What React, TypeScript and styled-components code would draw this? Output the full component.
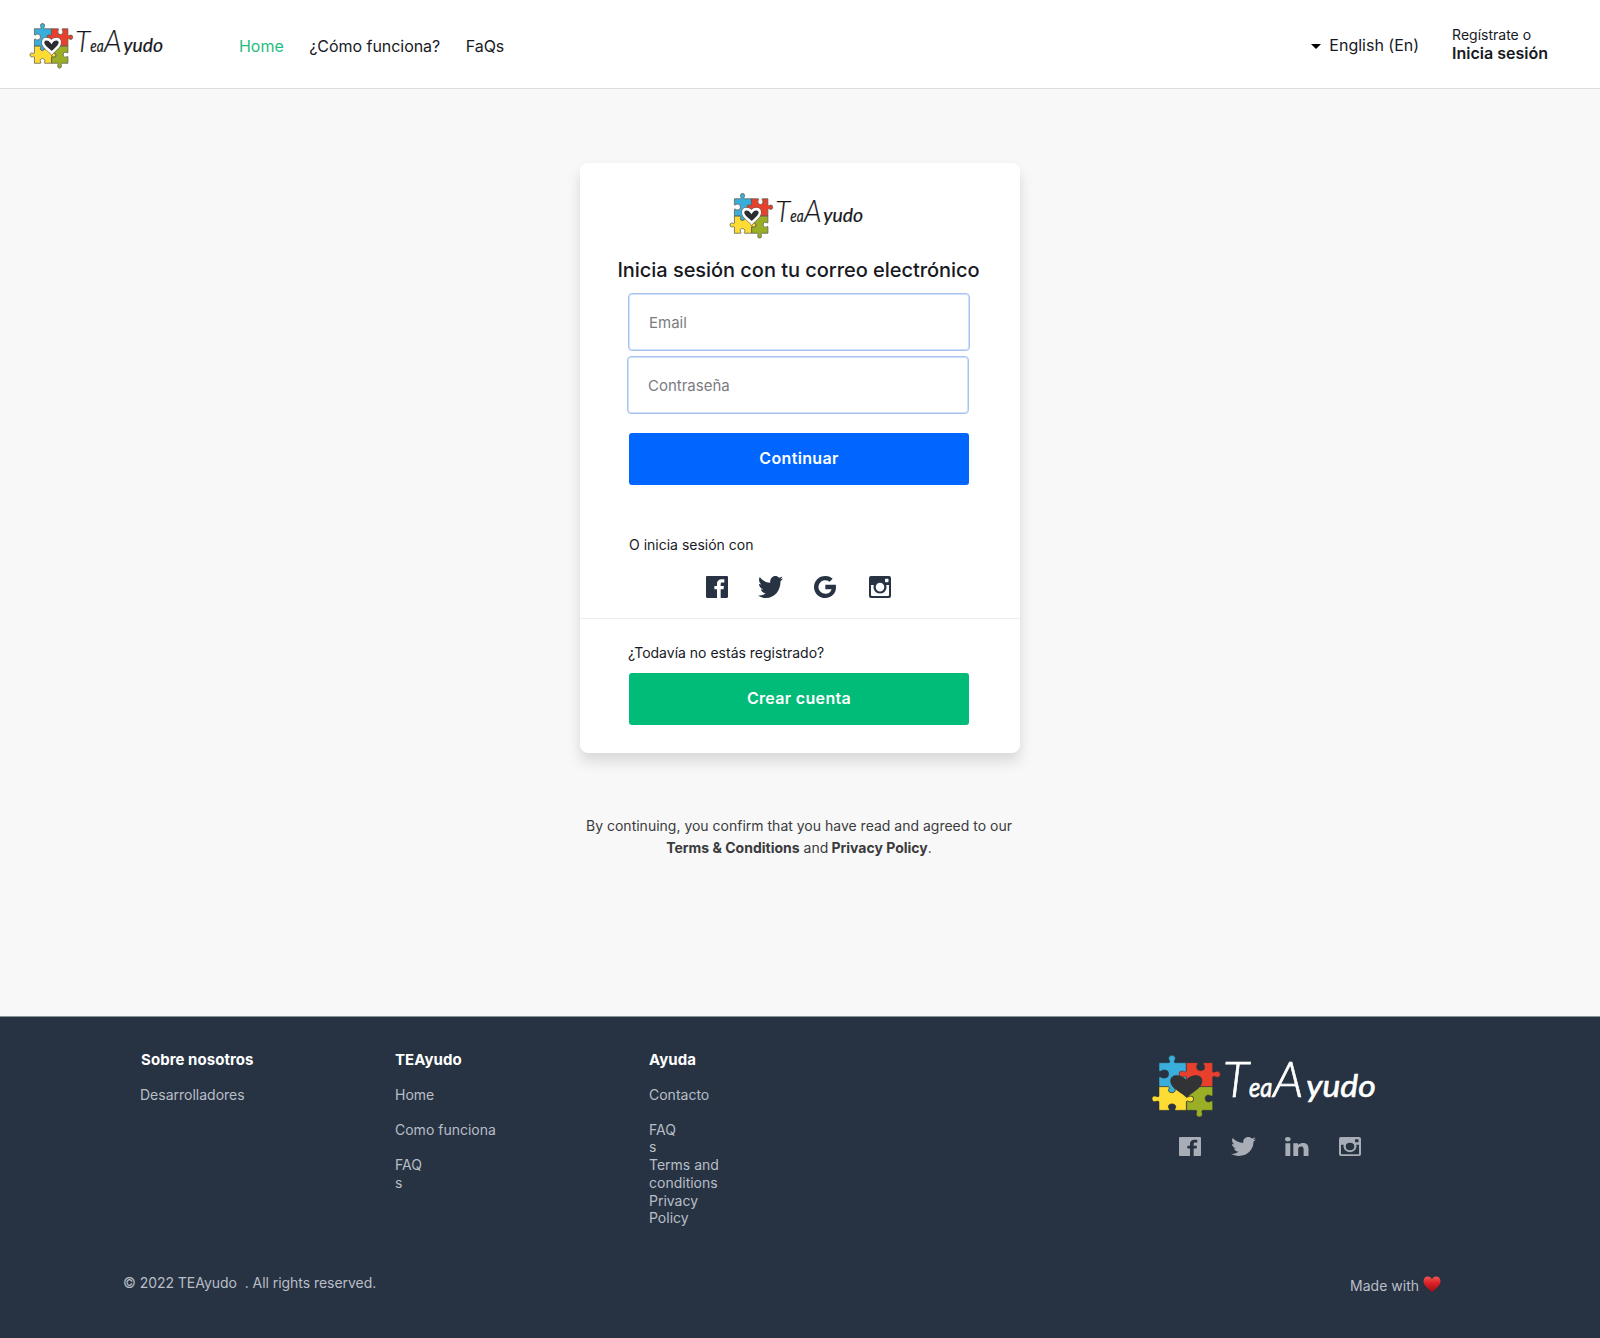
import React from "react";
import styled, { createGlobalStyle, css } from "styled-components";
import { IoLogoFacebook, IoLogoTwitter, IoLogoGoogle } from "react-icons/io";
import { FaLinkedinIn } from "react-icons/fa";

const GlobalStyle = createGlobalStyle`
  *, *::before, *::after { box-sizing: border-box; }
  body {
    margin: 0;
    background: #f8f8f8;
    color: #18191f;
    font-family: Inter, "Liberation Sans", sans-serif;
  }
  a { color: inherit; text-decoration: none; }
`;

const Page = styled.div`
  display: flex;
  flex-direction: column;
  min-height: 1338px;
`;

/* ---------- Header ---------- */

const Header = styled.header`
  display: flex;
  align-items: flex-start;
  height: 89px;
  padding: 0 52px 0 29px;
  background: #fff;
  border-bottom: 1px solid #dcdcdc;
`;

const HeaderLogo = styled.a`
  display: block;
  margin-top: 22.5px;
`;

const Nav = styled.nav`
  display: flex;
  gap: 25.5px;
  margin: 36px auto 0 75px;
  font-size: 16px;
  line-height: 20px;
  letter-spacing: -0.04px;
`;

const NavLink = styled.a<{ $active?: boolean }>`
  color: ${(p) => (p.$active ? "#1fbd80" : "#18191f")};
`;

const Language = styled.button`
  display: flex;
  align-items: center;
  gap: 8px;
  margin: 35px 33px 0 0;
  padding: 0;
  border: 0;
  background: none;
  color: #18191f;
  font: 400 16px/20px Inter, "Liberation Sans", sans-serif;
`;

const Caret = styled.span`
  border: 5px solid transparent;
  border-top-color: #000;
  border-bottom: 0;
  margin-top: 2px;
`;

const Account = styled.a`
  display: flex;
  flex-direction: column;
  margin-top: 26px;
  font-size: 14px;
  line-height: 18px;
`;

const AccountStrong = styled.strong`
  font-size: 16px;
  line-height: 19px;
  font-weight: 600;
`;

/* ---------- Login card ---------- */

const Main = styled.main`
  display: flex;
  flex-direction: column;
  align-items: center;
  height: 927px;
  padding-top: 74px;
`;

const Card = styled.section`
  width: 440px;
  height: 590px;
  background: #fff;
  border-radius: 8px;
  box-shadow: 0 9px 14px rgba(0, 0, 0, 0.12), 0 0 10px rgba(0, 0, 0, 0.02);
`;

const CardLogo = styled.div`
  width: 134px;
  height: 46px;
  margin: 30px 0 0 149px;
`;

const Title = styled.h1`
  margin: 18.5px 0 0 -3px;
  font-size: 20px;
  line-height: 24px;
  font-weight: 500;
  letter-spacing: -0.045px;
  text-align: center;
  white-space: nowrap;
`;

const Form = styled.form`
  display: flex;
  flex-direction: column;
  padding: 11.5px 0 0 48px;
`;

const Field = styled.input<{ $shift?: number }>`
  width: 342px;
  height: 58px;
  margin: 0 0 5px ${(p) => p.$shift ?? 0}px;
  padding: 0 20px;
  border: 1px solid #a6c3ee;
  border-radius: 4px;
  box-shadow: inset 0 0 0 1px #cfe1fc;
  background: #fff;
  outline: none;
  font: 400 15px/20px Inter, "Liberation Sans", sans-serif;
  &::placeholder { color: #7b7b82; opacity: 1; }
`;

const Button = styled.button<{ $tone: "blue" | "green" }>`
  width: 340px;
  height: 52px;
  padding: 0 0 2px;
  border: 0;
  border-radius: 3px;
  background: ${(p) => (p.$tone === "blue" ? "#0066ff" : "#00bc78")};
  color: #fff;
  font: 600 16px/20px Inter, "Liberation Sans", sans-serif;
  letter-spacing: 0.33px;
  ${(p) => (p.$tone === "blue" ? css`margin: 14px 0 0 1px;` : css`margin: 11px 0 0 1px;`)}
`;

const Hint = styled.p`
  margin: 0;
  font-size: 14px;
  line-height: 18px;
`;

const SocialBlock = styled.div`
  height: 134px;
  padding: 51px 0 0 49px;
  border-bottom: 1px solid #ececec;
`;

const SocialRow = styled.div`
  display: flex;
  padding: 22px 0 0 77px;
  color: #273343;
`;

const IconSlot = styled.a<{ $w: number; $h: number; $gap: number }>`
  display: block;
  width: ${(p) => p.$w}px;
  height: ${(p) => p.$h}px;
  margin-right: ${(p) => p.$gap}px;
  svg { display: block; width: 100%; height: 100%; }
`;

const RegisterBlock = styled.div`
  padding: 25px 0 0 48px;
`;

const Legal = styled.p`
  margin: 62px 0 0 -2px;
  color: #3b3b3d;
  font-size: 14px;
  line-height: 22px;
  text-align: center;
  b { font-weight: 700; }
`;

const TightSpace = styled.span`
  margin-right: 3.2px;
`;

/* ---------- Footer ---------- */

const Footer = styled.footer`
  display: flex;
  flex-direction: column;
  height: 322px;
  border-top: 1px solid #8b949b;
  background: #273343;
  color: #b9bec6;
`;

const FooterTop = styled.div`
  display: flex;
  height: 257px;
  padding: 33.5px 0 0 140px;
`;

const Column = styled.div<{ $w?: number }>`
  display: flex;
  flex-direction: column;
  width: ${(p) => p.$w ?? 254}px;
  font-size: 14px;
  line-height: 17.3px;
`;

const ColumnTitle = styled.h2<{ $indent?: number }>`
  height: 35.2px;
  margin: 0 0 0 ${(p) => p.$indent ?? 0}px;
  color: #fff;
  font-size: 15px;
  line-height: 18px;
  font-weight: 700;
  letter-spacing: 0.06px;
`;

const FooterLink = styled.a<{ $w?: number }>`
  height: 35.4px;
  width: ${(p) => (p.$w ? `${p.$w}px` : "auto")};
  overflow-wrap: anywhere;
`;

const Brand = styled.div`
  display: flex;
  flex-direction: column;
  margin: 4.5px 0 0 247px;
`;

const BrandSocial = styled.div`
  display: flex;
  padding: 18px 0 0 29px;
  color: #a9aeb6;
`;

const FooterBottom = styled.div`
  display: flex;
  justify-content: space-between;
  padding: 0 159px 0 123px;
  font-size: 14px;
  line-height: 18px;
`;

const Copyright = styled.span`
  white-space: pre;
  letter-spacing: -0.04px;
`;

const MadeWith = styled.span`
  display: flex;
  gap: 4px;
  padding-top: 3px;
`;

const HeartIcon = styled.svg`
  display: block;
  width: 18px;
  height: 17px;
  margin-top: -1.5px;
`;

/* ---------- Drawings ---------- */

const LogoSvg = styled.svg`
  display: block;
  overflow: visible;
`;

const Word = styled.text`
  font-family: Lato, "Open Sans", sans-serif;
  font-style: italic;
  font-weight: 400;
`;

const HEART =
  "M171 205 C160 190 122 178 122 154 C122 132 154 132 170 151 C184 132 218 132 218 154 C218 178 182 190 171 205 Z";

function Puzzle({ dark }: { dark?: boolean }) {
  const edge = dark ? "#2b332f" : "#5b5a50";
  const line = { stroke: edge, strokeWidth: dark ? 1.6 : 3.4, strokeLinejoin: "round" as const };
  return (
    <g>
      <path
        fill="#3aaedb"
        {...line}
        d="M88 99 H118 C124 96 117 92 117 86 A10 9 0 0 1 137 86 C137 92 130 96 136 99 H170 V171 H137 C132 174 138 178 137 183 A11 9 0 0 1 116 183 C116 178 122 174 116 171 H88 V142 C92 138 97 148 105 145 A11 11 0 0 0 105 121 C97 119 92 128 88 124 Z"
      />
      <path
        fill="#e8402c"
        {...line}
        d="M170 99 H203 C207 103 199 106 201 113 A12 10 0 0 0 225 113 C226 106 218 103 222 99 H249 V126 C253 131 256 125 263 125 A9 9 0 0 1 263 143 C256 143 253 137 249 142 V171 H170 V142 C166 138 163 142 158 142 A9 8 0 0 1 158 124 C163 124 166 129 170 125 Z"
      />
      <path
        fill="#ffdc34"
        {...line}
        d="M88 171 H116 C122 174 116 178 116 183 A11 9 0 0 0 137 183 C138 178 132 174 137 171 H170 V200 C174 204 177 199 183 199 A9 9 0 0 1 183 217 C177 217 174 212 170 216 V242 H137 C133 238 141 234 138 228 A12 9 0 0 0 116 228 C114 234 122 238 118 242 H88 V216 C84 212 81 216 73 216 A9 9 0 0 1 73 199 C81 199 84 204 88 200 Z"
      />
      <path
        fill="#9aaf26"
        {...line}
        d="M171 171 H249 V198 C245 202 241 195 234 196 A11 11 0 0 0 234 217 C241 218 245 211 249 215 V242 H219 C213 245 219 249 218 254 A9 8 0 0 1 200 254 C199 249 205 245 199 242 H171 V216 C174 212 177 217 183 217 A9 9 0 0 0 183 199 C177 199 174 204 171 200 Z"
      />
      {dark ? (
        <path d={HEART} fill="#313336" />
      ) : (
        <g transform="translate(170 169) scale(.84) translate(-170 -169)">
          <path d={HEART} fill="#2c2d30" stroke="#55544f" strokeWidth="19" />
          <path d={HEART} fill="#2c2d30" stroke="#fff" strokeWidth="14" />
        </g>
      )}
    </g>
  );
}

function Wordmark({ color, weight }: { color: string; weight: number }) {
  return (
    <Word y="202" fill={color} stroke={color} strokeWidth={weight}>
      <tspan x="280" fontSize="146" fontWeight="300">T</tspan>
      <tspan x="358" fontSize="82" textLength="70" lengthAdjust="spacingAndGlyphs">ea</tspan>
      <tspan x="430" fontSize="150" fontWeight="300">A</tspan>
      <tspan x="530" fontSize="94" textLength="208" lengthAdjust="spacingAndGlyphs">yudo</tspan>
    </Word>
  );
}

function LogoLight() {
  return (
    <LogoSvg width="135" height="46" viewBox="0 0 135 46">
      <g transform="scale(.208 .241) translate(-62 -75)">
        <Puzzle />
      </g>
      <g transform="translate(-7.4 -12.3) scale(.1916 .2046)">
        <Wordmark color="#17181c" weight={1} />
      </g>
    </LogoSvg>
  );
}

function LogoDark() {
  return (
    <LogoSvg width="228" height="64" viewBox="0 0 228 64">
      <g transform="scale(.3333) translate(-61 -76)">
        <Puzzle dark />
        <Wordmark color="#fff" weight={2} />
      </g>
    </LogoSvg>
  );
}

function InstagramIcon() {
  return (
    <svg viewBox="0 0 22 22" preserveAspectRatio="none" fill="currentColor">
      <path
        fillRule="evenodd"
        d="M2 0 H20 A2 2 0 0 1 22 2 V20 A2 2 0 0 1 20 22 H2 A2 2 0 0 1 0 20 V2 A2 2 0 0 1 2 0 Z M2 9 V19 A1 1 0 0 0 3 20 H19 A1 1 0 0 0 20 19 V9 H17.3 A6.6 6.6 0 1 1 4.7 9 Z M16.6 2.7 A.6 .6 0 0 0 16 3.3 V5.6 A.6 .6 0 0 0 16.6 6.2 H18.9 A.6 .6 0 0 0 19.5 5.6 V3.3 A.6 .6 0 0 0 18.9 2.7 Z M11 6.8 A4.3 4.3 0 1 0 11 15.4 A4.3 4.3 0 1 0 11 6.8 Z"
      />
    </svg>
  );
}

const FacebookIcon = () => <IoLogoFacebook viewBox="64 64 384 384" preserveAspectRatio="none" />;
const TwitterIcon = () => <IoLogoTwitter viewBox="20 64 472 384" preserveAspectRatio="none" />;
const GoogleIcon = () => <IoLogoGoogle viewBox="52 48 408 416" preserveAspectRatio="none" />;
const LinkedinIcon = () => <FaLinkedinIn viewBox="0 0 448 448" preserveAspectRatio="none" />;

function Heart() {
  return (
    <HeartIcon viewBox="0 0 18 17">
      <defs>
        <linearGradient id="heartFill" x1="0" y1="0" x2="0" y2="1">
          <stop offset="0" stopColor="#f4584f" />
          <stop offset=".4" stopColor="#dc2228" />
          <stop offset="1" stopColor="#9a0d14" />
        </linearGradient>
      </defs>
      <path
        fill="url(#heartFill)"
        d="M9 16.5 C7 13.5 .5 10.5 .5 5 C.5 2.3 2.4 .5 4.8 .5 C6.8 .5 8.3 1.7 9 3.5 C9.7 1.7 11.2 .5 13.2 .5 C15.6 .5 17.5 2.3 17.5 5 C17.5 10.5 11 13.5 9 16.5 Z"
      />
    </HeartIcon>
  );
}

export default function App() {
  return (
    <Page>
      <GlobalStyle />
      <Header>
        <HeaderLogo href="#"><LogoLight /></HeaderLogo>
        <Nav>
          <NavLink href="#" $active>Home</NavLink>
          <NavLink href="#">¿Cómo funciona?</NavLink>
          <NavLink href="#">FaQs</NavLink>
        </Nav>
        <Language type="button">
          <Caret />
          English (En)
        </Language>
        <Account href="#">
          Regístrate o
          <AccountStrong>Inicia sesión</AccountStrong>
        </Account>
      </Header>

      <Main>
        <Card>
          <CardLogo>
            <LogoLight />
          </CardLogo>
          <Title>Inicia sesión con tu correo electrónico</Title>
          <Form>
            <Field type="email" placeholder="Email" />
            <Field type="password" placeholder="Contraseña" $shift={-1} />
            <Button type="button" $tone="blue">Continuar</Button>
          </Form>
          <SocialBlock>
            <Hint>O inicia sesión con</Hint>
            <SocialRow>
              <IconSlot href="#" $w={22} $h={22} $gap={30}><FacebookIcon /></IconSlot>
              <IconSlot href="#" $w={25} $h={22} $gap={30.5}><TwitterIcon /></IconSlot>
              <IconSlot href="#" $w={22} $h={22} $gap={33.5}><GoogleIcon /></IconSlot>
              <IconSlot href="#" $w={22} $h={22} $gap={0}><InstagramIcon /></IconSlot>
            </SocialRow>
          </SocialBlock>
          <RegisterBlock>
            <Hint>¿Todavía no estás registrado?</Hint>
            <Button type="button" $tone="green">Crear cuenta</Button>
          </RegisterBlock>
        </Card>
        <Legal>
          By continuing, you confirm that you have read and agreed to our
          <br />
          <b>Terms &amp; Conditions</b> <TightSpace>and</TightSpace>
          <b>Privacy Policy</b>.
        </Legal>
      </Main>

      <Footer>
        <FooterTop>
          <Column $w={255}>
            <ColumnTitle $indent={1}>Sobre nosotros</ColumnTitle>
            <FooterLink href="#">Desarrolladores</FooterLink>
          </Column>
          <Column>
            <ColumnTitle>TEAyudo</ColumnTitle>
            <FooterLink href="#">Home</FooterLink>
            <FooterLink href="#">Como funciona</FooterLink>
            <FooterLink href="#" $w={30}>FAQs</FooterLink>
          </Column>
          <Column>
            <ColumnTitle>Ayuda</ColumnTitle>
            <FooterLink href="#">Contacto</FooterLink>
            <FooterLink href="#" $w={30}>FAQs</FooterLink>
            <FooterLink href="#" $w={76}>Terms and conditions</FooterLink>
            <FooterLink href="#" $w={60}>Privacy Policy</FooterLink>
          </Column>
          <Brand>
            <LogoDark />
            <BrandSocial>
              <IconSlot href="#" $w={22} $h={19} $gap={29.5}><FacebookIcon /></IconSlot>
              <IconSlot href="#" $w={25} $h={19} $gap={29.5}><TwitterIcon /></IconSlot>
              <IconSlot href="#" $w={23.5} $h={19} $gap={30}><LinkedinIcon /></IconSlot>
              <IconSlot href="#" $w={22} $h={19} $gap={0}><InstagramIcon /></IconSlot>
            </BrandSocial>
          </Brand>
        </FooterTop>
        <FooterBottom>
          <Copyright>{"© 2022 TEAyudo  . All rights reserved."}</Copyright>
          <MadeWith>
            Made with
            <Heart />
          </MadeWith>
        </FooterBottom>
      </Footer>
    </Page>
  );
}
